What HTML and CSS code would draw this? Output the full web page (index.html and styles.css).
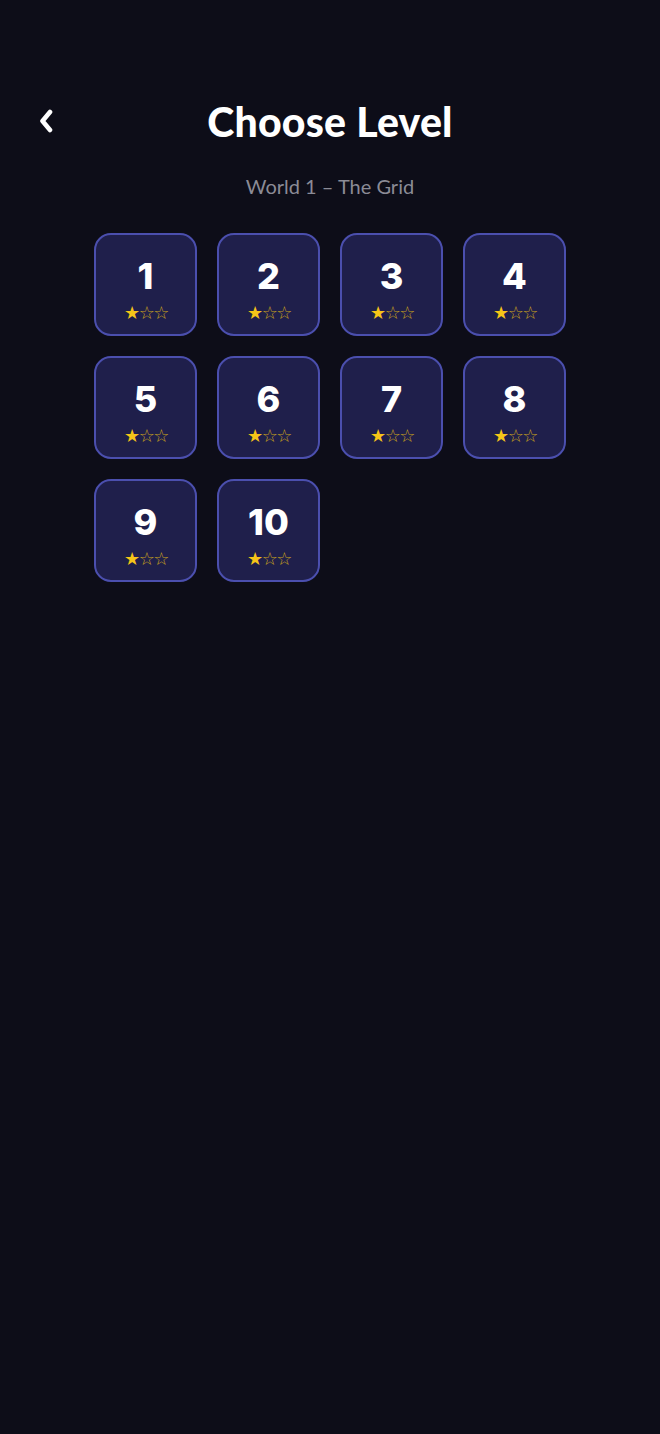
FILE: index.html
```html
<!DOCTYPE html>
<html>
<head>
<meta charset="utf-8">
<link rel="stylesheet" href="styles.css">
</head>
<body>
<div class="screen">
  <header class="header">
    <button class="back" aria-label="Back">
      <svg width="16" height="24" viewBox="0 0 16 24"><path d="M12 3 L4.5 12 L12 21" fill="none" stroke="#ffffff" stroke-width="4.6" stroke-linecap="round" stroke-linejoin="round"/></svg>
    </button>
    <h1 class="title">Choose Level</h1>
  </header>
  <p class="subtitle">World 1 – The Grid</p>
  <div class="grid">
    <div class="tile"><span class="num">1</span><span class="stars"><span class="on">★</span><span class="off">☆☆</span></span></div>
    <div class="tile"><span class="num">2</span><span class="stars"><span class="on">★</span><span class="off">☆☆</span></span></div>
    <div class="tile"><span class="num">3</span><span class="stars"><span class="on">★</span><span class="off">☆☆</span></span></div>
    <div class="tile"><span class="num">4</span><span class="stars"><span class="on">★</span><span class="off">☆☆</span></span></div>
    <div class="tile"><span class="num">5</span><span class="stars"><span class="on">★</span><span class="off">☆☆</span></span></div>
    <div class="tile"><span class="num">6</span><span class="stars"><span class="on">★</span><span class="off">☆☆</span></span></div>
    <div class="tile"><span class="num">7</span><span class="stars"><span class="on">★</span><span class="off">☆☆</span></span></div>
    <div class="tile"><span class="num">8</span><span class="stars"><span class="on">★</span><span class="off">☆☆</span></span></div>
    <div class="tile"><span class="num">9</span><span class="stars"><span class="on">★</span><span class="off">☆☆</span></span></div>
    <div class="tile"><span class="num">10</span><span class="stars"><span class="on">★</span><span class="off">☆☆</span></span></div>
  </div>
</div>
</body>
</html>
```

FILE: styles.css
```css
html, body {
  margin: 0;
  padding: 0;
  background: #0d0d18;
}
body {
  font-family: "Lato", "Noto Sans", sans-serif;
  color: #ffffff;
  min-height: 1434px;
}
.screen {
  padding-top: 96px;
}
.header {
  position: relative;
  height: 52px;
  display: flex;
  align-items: center;
  justify-content: center;
}
.back {
  position: absolute;
  left: 37px;
  top: 13px;
  background: none;
  border: none;
  padding: 0;
  width: 18px;
  height: 24px;
  display: flex;
  align-items: center;
  justify-content: center;
}
.title {
  margin: 0;
  font-size: 41px;
  font-weight: 900;
  letter-spacing: 0.2px;
  line-height: 52px;
}
.subtitle {
  margin: 25px 0 0;
  text-align: center;
  font-size: 20px;
  color: #8b8b96;
  line-height: 26px;
}
.grid {
  margin: 34px auto 0;
  width: 472px;
  display: grid;
  grid-template-columns: repeat(4, 103px);
  gap: 20px;
}
.tile {
  box-sizing: border-box;
  height: 103px;
  border: 2px solid #4b4fae;
  border-radius: 17px;
  background: #1f1f4b;
  display: flex;
  flex-direction: column;
  align-items: center;
}
.num {
  margin-top: 22px;
  font-family: "Inter", "Lato", sans-serif;
  font-weight: 800;
  font-size: 36px;
  line-height: 38px;
}
.stars {
  margin-top: 8px;
  font-family: "DejaVu Sans", sans-serif;
  font-size: 18px;
  line-height: 20px;
  letter-spacing: -1.5px;
  padding-left: 1px;
}
.on { color: #f6c518; }
.off { color: #c9a21c; }
```
